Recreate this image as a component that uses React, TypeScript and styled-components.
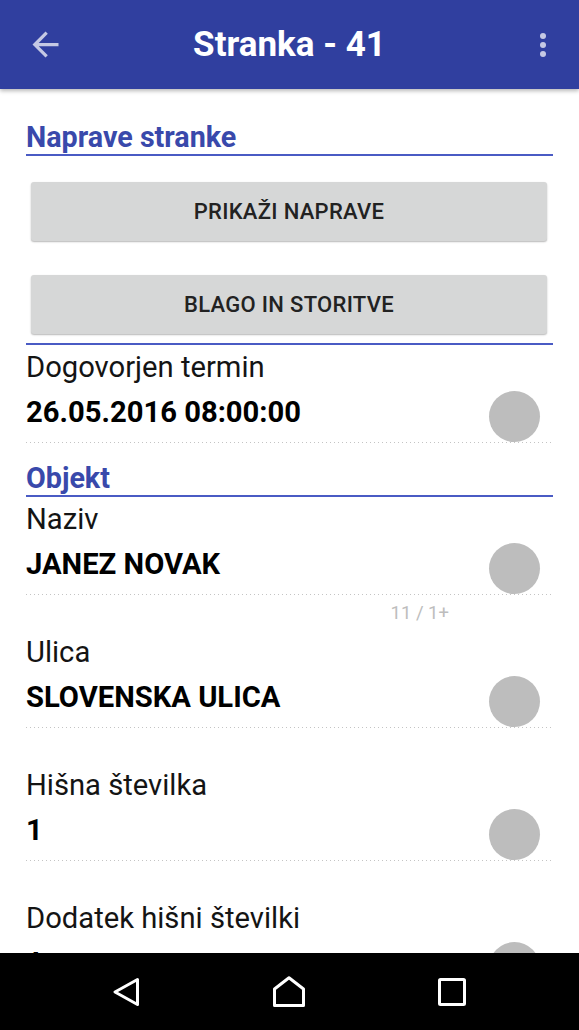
import React from "react";
import styled, { createGlobalStyle } from "styled-components";

const Global = createGlobalStyle`
  html, body { margin: 0; padding: 0; background: #fff; }
  body { font-family: Roboto, "Noto Sans", sans-serif; }
  * { box-sizing: border-box; }
`;

const Screen = styled.div`
  width: 579px;
  height: 1030px;
  display: flex;
  flex-direction: column;
  overflow: hidden;
  background: #fff;
`;

const AppBar = styled.header`
  height: 89px;
  flex: 0 0 89px;
  background: #303f9f;
  display: grid;
  grid-template-columns: 1fr auto 1fr;
  align-items: center;
  box-shadow: 0 2px 4px rgba(0, 0, 0, 0.28);
  position: relative;
  z-index: 2;
`;

const Title = styled.h1`
  margin: 0;
  color: #fff;
  font-family: Roboto, sans-serif;
  font-weight: 700;
  font-size: 35px;
  line-height: 40px;
  letter-spacing: 0;
`;

const IconSlot = styled.div<{ $align: "start" | "end" }>`
  display: flex;
  justify-content: ${(p) => (p.$align === "start" ? "flex-start" : "flex-end")};
  padding: ${(p) => (p.$align === "start" ? "0 0 0 26px" : "0 18px 0 0")};
  color: rgba(255, 255, 255, 0.72);
  svg { display: block; }
`;

const Content = styled.main`
  flex: 1;
  overflow: hidden;
  padding: 0 26px;
  display: flex;
  flex-direction: column;
`;

const SectionTitle = styled.h2<{ $top: number }>`
  margin: ${(p) => p.$top}px 0 0;
  color: #3949ab;
  font-family: Roboto, sans-serif;
  font-weight: 700;
  font-size: 28.7px;
  line-height: 34px;
  border-bottom: 2px solid #4a5bc4;
`;

const ButtonGroup = styled.div`
  display: flex;
  flex-direction: column;
  gap: 34px;
  padding: 26px 6px 9px 5px;
  border-bottom: 2px solid #4a5bc4;
`;

const Button = styled.button`
  height: 59px;
  border: none;
  border-radius: 3px;
  background: #d6d7d7;
  color: #222;
  font-family: Roboto, sans-serif;
  font-weight: 500;
  font-size: 22px;
  letter-spacing: 0.3px;
  box-shadow: 0 1px 2px rgba(0, 0, 0, 0.22), 0 1px 1px rgba(0, 0, 0, 0.08);
  cursor: pointer;
`;

const Field = styled.div`
  padding-top: 5px;
  display: flex;
  flex-direction: column;
`;

const Label = styled.div`
  font-family: Roboto, sans-serif;
  font-size: 29.2px;
  line-height: 34px;
  color: #141414;
`;

const ValueRow = styled.div`
  height: 58px;
  display: flex;
  align-items: center;
  justify-content: space-between;
  padding-right: 13px;
`;

const Value = styled.div`
  font-family: Roboto, sans-serif;
  font-weight: 700;
  font-size: 29.2px;
  line-height: 34px;
  color: #000;
  margin-top: -3px;
`;

const Toggle = styled.span`
  align-self: flex-end;
  width: 51px;
  height: 51px;
  border-radius: 50%;
  background: #bdbdbd;
`;

const Dots = styled.div`
  height: 1px;
  background-image: linear-gradient(to right, #c4c4c4 0 1px, transparent 1px 4px);
  background-size: 4px 1px;
`;

const Helper = styled.div`
  height: 35px;
  display: flex;
  align-items: center;
  justify-content: flex-end;
  padding-right: 104px;
  font-family: Roboto, sans-serif;
  font-size: 18.5px;
  color: #bdbdbd;
`;

const NavBar = styled.nav`
  flex: 0 0 77px;
  height: 77px;
  background: #000;
  display: grid;
  grid-template-columns: repeat(3, 1fr);
  align-items: center;
  justify-items: center;
  padding: 0 46px;
  svg { display: block; }
`;

const ArrowBack = () => (
  <svg width="39" height="39" viewBox="0 0 24 24" fill="currentColor">
    <path d="M20 11H7.83l5.59-5.59L12 4l-8 8 8 8 1.41-1.41L7.83 13H20v-2z" />
  </svg>
);

const MoreVert = () => (
  <svg width="36" height="36" viewBox="0 0 24 24" fill="currentColor">
    <circle cx="12" cy="6" r="2" />
    <circle cx="12" cy="12" r="2" />
    <circle cx="12" cy="18" r="2" />
  </svg>
);

type FieldProps = { label: string; value: string; helper?: string | null; showHelper?: boolean };

const FormField = ({ label, value, helper, showHelper = true }: FieldProps) => (
  <Field>
    <Label>{label}</Label>
    <ValueRow>
      <Value>{value}</Value>
      <Toggle />
    </ValueRow>
    <Dots />
    {showHelper && <Helper>{helper ?? ""}</Helper>}
  </Field>
);

export default function App() {
  return (
    <>
      <Global />
      <Screen>
        <AppBar>
          <IconSlot $align="start">
            <ArrowBack />
          </IconSlot>
          <Title>Stranka - 41</Title>
          <IconSlot $align="end">
            <MoreVert />
          </IconSlot>
        </AppBar>
        <Content>
          <SectionTitle $top={31}>Naprave stranke</SectionTitle>
          <ButtonGroup>
            <Button>PRIKAŽI NAPRAVE</Button>
            <Button>BLAGO IN STORITVE</Button>
          </ButtonGroup>
          <FormField label="Dogovorjen termin" value="26.05.2016 08:00:00" showHelper={false} />
          <SectionTitle $top={18}>Objekt</SectionTitle>
          <FormField label="Naziv" value="JANEZ NOVAK" helper="11 / 1+" />
          <FormField label="Ulica" value="SLOVENSKA ULICA" />
          <FormField label="Hišna številka" value="1" />
          <FormField label="Dodatek hišni številki" value="A" />
        </Content>
        <NavBar>
          <svg width="30" height="32" viewBox="0 0 30 32" fill="none" stroke="#fff" strokeWidth="3" strokeLinejoin="round">
            <path d="M25.5 3.5 L3 16 L25.5 28.5 Z" />
          </svg>
          <svg width="34" height="32" viewBox="0 0 34 32" fill="none" stroke="#fff" strokeWidth="3" strokeLinejoin="round">
            <path d="M2.5 13 L17 1.8 L31.5 13 V29.5 H2.5 Z" />
          </svg>
          <svg width="30" height="30" viewBox="0 0 30 30" fill="none" stroke="#fff" strokeWidth="3" strokeLinejoin="round">
            <rect x="2.5" y="2.5" width="25" height="25" rx="1" />
          </svg>
        </NavBar>
      </Screen>
    </>
  );
}
